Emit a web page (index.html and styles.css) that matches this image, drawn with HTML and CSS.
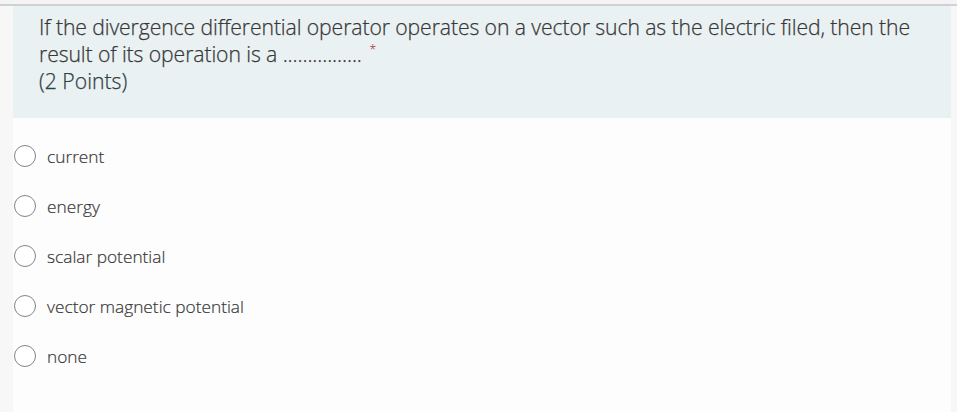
FILE: index.html
```html
<!DOCTYPE html>
<html>
<head>
<meta charset="utf-8">
<link rel="stylesheet" href="styles.css">
</head>
<body>
<div class="topline"></div>
<div class="page">
  <div class="question">
    <div class="qtext">If the divergence differential operator operates on a vector such as the electric filed, then the result of its operation is a ................ <span class="req">*</span></div>
    <div class="points">(2 Points)</div>
  </div>
  <div class="options">
    <label class="opt"><span class="radio"></span><span class="label">current</span></label>
    <label class="opt"><span class="radio"></span><span class="label">energy</span></label>
    <label class="opt"><span class="radio"></span><span class="label">scalar potential</span></label>
    <label class="opt"><span class="radio"></span><span class="label">vector magnetic potential</span></label>
    <label class="opt"><span class="radio"></span><span class="label">none</span></label>
  </div>
</div>
</body>
</html>
```
FILE: styles.css
```css
html, body {
  margin: 0;
  padding: 0;
  background: #f7f7f7;
  width: 957px;
  height: 412px;
  overflow: hidden;
  font-family: "Open Sans", "Noto Sans", sans-serif;
  color: #333;
}
.topline {
  height: 4px;
  background: #f4f4f4;
  border-bottom: 2px solid #cfd1d2;
}
.page {
  margin: 0 6px 0 13px;
  background: #fdfdfd;
  height: 406px;
}
.question {
  background: #eaf1f3;
  padding: 7px 20px 0 26px;
  height: 112px;
  box-sizing: border-box;
}
.qtext {
  max-width: 880px;
  font-size: 21.2px;
  line-height: 27px;
  color: #383838;
  letter-spacing: -0.1px;
  font-weight: 300;
  -webkit-text-stroke: 0.25px #383838;
}
.req {
  display: inline-block;
  vertical-align: top;
  color: #a4262c;
  font-size: 13px;
  line-height: 13px;
  margin-top: 3px;
  margin-left: 2px;
  -webkit-text-stroke: 0;
}
.points {
  font-size: 21.2px;
  line-height: 27px;
  color: #2f4040;
  font-weight: 300;
  -webkit-text-stroke: 0.25px #2f4040;
}
.options {
  display: flex;
  flex-direction: column;
  padding-top: 27px;
  gap: 28px;
  margin-left: -13px;
}
.opt {
  display: flex;
  align-items: center;
  gap: 11px;
  height: 22px;
  padding-left: 14px;
}
.radio {
  width: 20px;
  height: 20px;
  border: 1.5px solid #858585;
  border-radius: 50%;
  background: #fff;
  flex: none;
}
.label {
  font-size: 17.3px;
  color: #383838;
  font-weight: 300;
  -webkit-text-stroke: 0.2px #383838;
}
```
